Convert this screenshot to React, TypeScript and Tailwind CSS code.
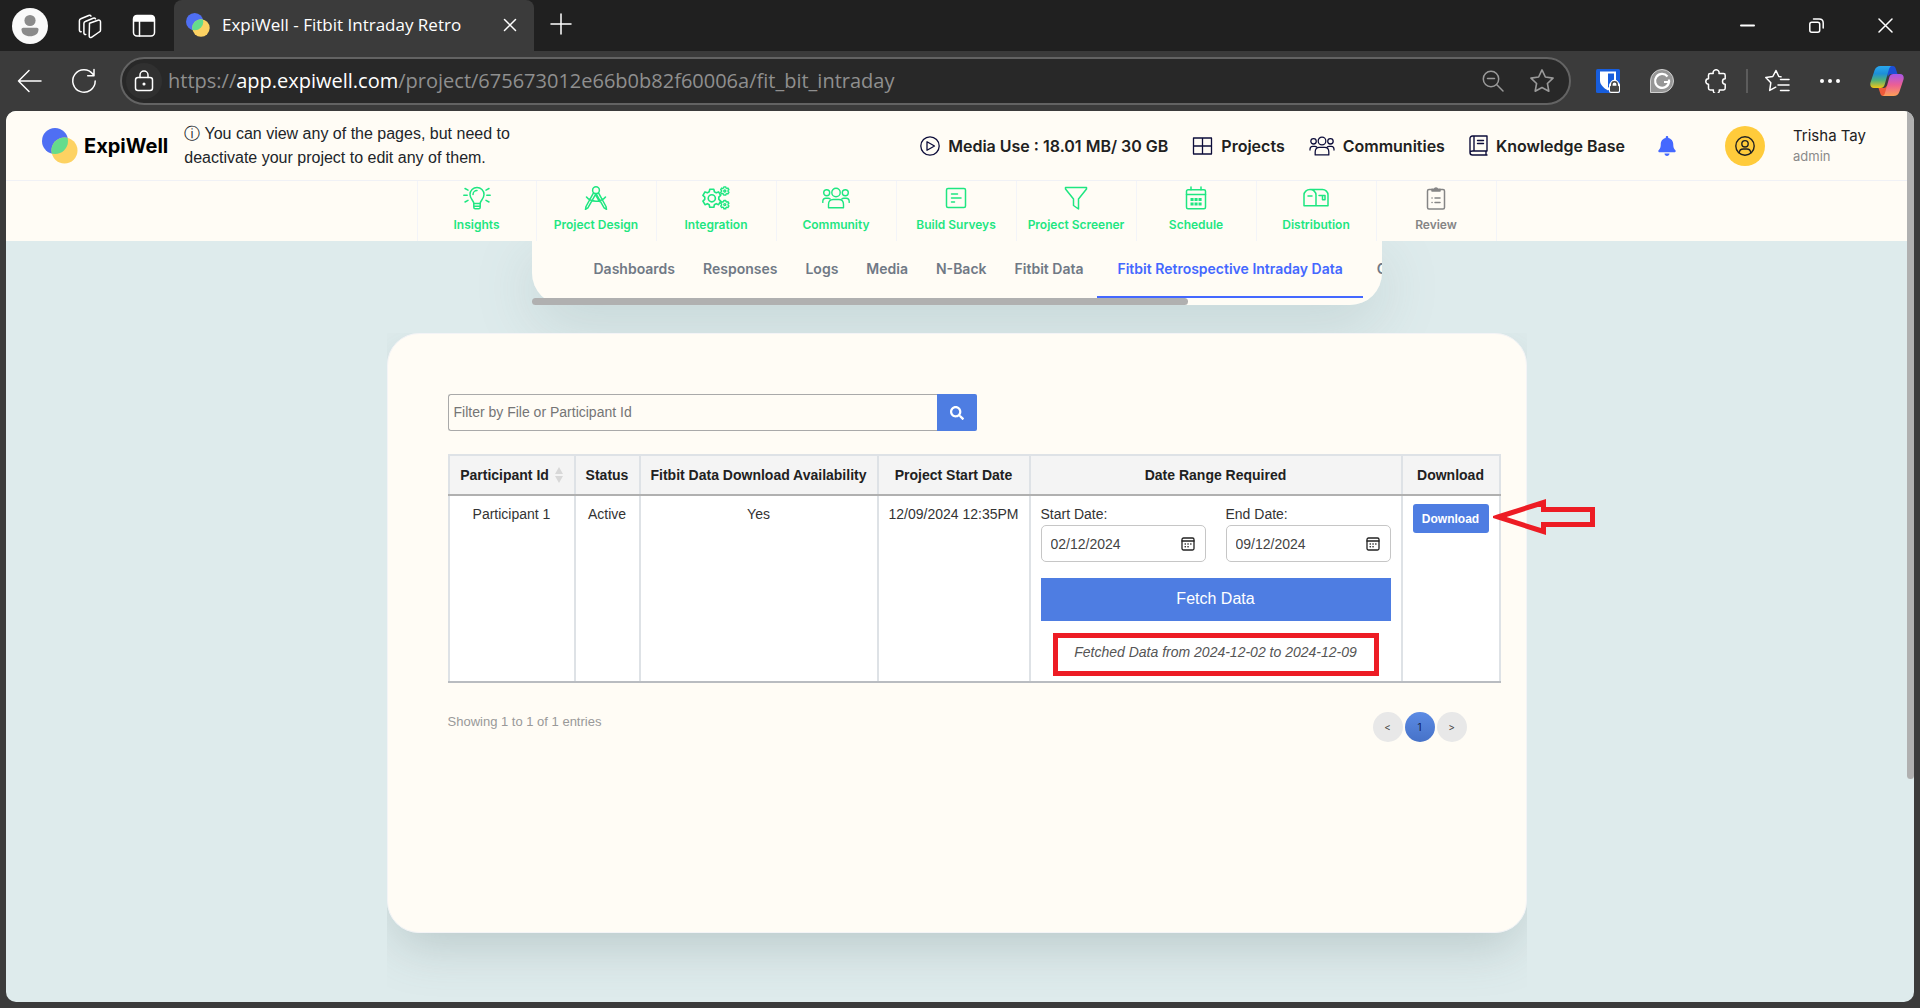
import { useState, type ReactNode } from "react";
import { FaBell, FaSearch } from "react-icons/fa";
import { clsx } from "clsx";

type IconProps = { className?: string; box?: string; width?: number; children: ReactNode };

function Icon({ className, box = "0 0 24 24", width = 1.5, children }: IconProps) {
  return (
    <svg className={clsx("shrink-0", className)} viewBox={box} fill="none" stroke="currentColor" strokeWidth={width} strokeLinecap="round" strokeLinejoin="round" aria-hidden="true">
      {children}
    </svg>
  );
}

function LogoMark({ className }: { className?: string }) {
  return (
    <svg className={clsx("shrink-0", className)} viewBox="0 0 36 36" aria-hidden="true">
      <defs>
        <clipPath id="logo-blue">
          <circle cx="13" cy="13" r="13" />
        </clipPath>
      </defs>
      <circle cx="13" cy="13" r="13" fill="#4f6ff3" />
      <circle cx="22.5" cy="22.5" r="13" fill="#fdd262" />
      <circle cx="22.5" cy="22.5" r="13" fill="#65dc8c" clipPath="url(#logo-blue)" />
    </svg>
  );
}

function PeopleIcon({ className }: { className?: string }) {
  return (
    <Icon className={className} box="0 0 28 22" width={1.4}>
      <circle cx="14" cy="5.5" r="4.2" />
      <circle cx="4.7" cy="5.8" r="3" />
      <circle cx="23.3" cy="5.8" r="3" />
      <path d="M6.5 20.8v-3.3c0-3.2 1.8-5 4.6-5h5.8c2.8 0 4.6 1.8 4.6 5v3.3z" />
      <path d="M.8 15.4v-.8c0-2 1.2-3.3 3-3.3h2.4c.8 0 1.5.3 2 .8M27.2 15.4v-.8c0-2-1.2-3.3-3-3.3h-2.4c-.8 0-1.5.3-2 .8" />
    </Icon>
  );
}

function TitleBar() {
  return (
    <div className="flex h-[51px] items-center bg-[#202020] text-white">
      <button aria-label="Profile" className="ml-3">
        <svg className="size-9" viewBox="0 0 36 36">
          <circle cx="18" cy="18" r="18" fill="#fafafa" />
          <circle cx="18" cy="12.5" r="5.6" fill="#8b8b8b" />
          <path d="M9.5 21.5c0-1 .8-1.7 1.7-1.7h13.6c1 0 1.7.8 1.7 1.7 0 4.5-3.8 6.8-8.5 6.8s-8.5-2.300-8.500-6.800z" fill="#8b8b8b" />
        </svg>
      </button>
      <button aria-label="Workspaces" className="ml-7">
        <Icon className="size-7" box="0 0 28 28">
          <path d="M13.500 11.300l8.500-3.100c1.300-.5 2.500.3 2.500 1.600v8.400c0 .8-.5 1.500-1.300 1.800l-7.700 5.300c-1.200.6-2.300 0-2.300-1.300z" />
          <path d="M9.800 22.500c-1.100.2-1.900-.5-1.900-1.600v-9.400c0-.9.500-1.700 1.400-2l7.900-3.300c1-.4 1.900-.1 2.300.6" />
          <path d="M5.200 19.800c-1.100.1-1.800-.6-1.800-1.700V8.800c0-.9.500-1.700 1.400-2l7.900-3.300c1-.4 1.900-.1 2.300.6" />
        </Icon>
      </button>
      <button aria-label="Tab actions" className="ml-[26px]">
        <Icon className="size-7" box="0 0 28 28">
          <rect x="3.500" y="3.500" width="21" height="20.500" rx="3.500" />
          <path d="M4 9V6.500C4 5 5 4 6.500 4h15C23 4 24 5 24 6.500V9z" fill="currentColor" />
          <path d="M9.500 9.500V24" />
        </Icon>
      </button>
      <div className="ml-4 flex h-full w-[360px] items-center rounded-t-lg bg-[#3b3b3b] px-3 pb-0.5">
        <LogoMark className="size-6" />
        <span className="ml-3 flex-1 truncate font-['Open_Sans',sans-serif] text-[17px]">ExpiWell - Fitbit Intraday Retro</span>
        <button aria-label="Close tab" className="p-1">
          <Icon className="size-4" box="0 0 16 16"><path d="M2.500 2.500l11 11M13.500 2.500l-11 11" /></Icon>
        </button>
      </div>
      <button aria-label="New tab" className="ml-4 pb-1">
        <Icon className="size-[22px]" box="0 0 22 22"><path d="M11 1v20M1 11h20" /></Icon>
      </button>
      <div className="ml-auto flex items-center gap-[54px] pr-[27px]">
        <button aria-label="Minimize">
          <Icon className="size-[15px]" box="0 0 15 15" width={2}><path d="M1 7.500h13" /></Icon>
        </button>
        <button aria-label="Restore">
          <Icon className="size-[15px]" box="0 0 15 15">
            <rect x=".8" y="4.300" width="9.900" height="9.900" rx="2" />
            <path d="M4.500 1h5.700c2.300 0 4 1.700 4 4v5" />
          </Icon>
        </button>
        <button aria-label="Close window">
          <Icon className="size-[15px]" box="0 0 15 15"><path d="M1 1l13 13M14 1L1 14" /></Icon>
        </button>
      </div>
    </div>
  );
}

function AddressBar() {
  return (
    <div className="flex h-15 items-center text-white">
      <button aria-label="Back" className="ml-4">
        <Icon className="size-7" box="0 0 28 28"><path d="M25 14H2.500M13 3.500L2.500 14 13 24.500" /></Icon>
      </button>
      <button aria-label="Refresh" className="mr-[22px] ml-[26px]">
        <Icon className="size-7" box="0 0 28 28"><path d="M25.200 14A11.200 11.200 0 1 1 23 7.300M24 2.500v6.300h-6.300" /></Icon>
      </button>
      <div className="flex h-12 min-w-0 flex-1 items-center rounded-full border-2 border-[#636363] bg-[#282828] px-1">
        <button aria-label="Site information" className="flex size-9 shrink-0 items-center justify-center rounded-full bg-[#303030]">
          <Icon className="size-6">
            <rect x="3.500" y="8.500" width="17" height="13" rx="2.500" />
            <path d="M8 8.500V6a4 4 0 0 1 8 0v2.500" />
            <circle cx="12" cy="15" r=".8" fill="currentColor" />
          </Icon>
        </button>
        <p className="ml-1.5 flex-1 truncate font-['Open_Sans',sans-serif] text-[20px] text-[#8f8f8f]">
          https://<span className="text-white">app.expiwell.com</span>/project/675673012e66b0b82f60006a/fit_bit_intraday
        </p>
        <button aria-label="Zoom" className="text-[#9a9a9a]">
          <Icon className="size-6"><circle cx="10" cy="10" r="7.700" /><path d="M15.800 15.800L22 22M6.500 9.500h7" /></Icon>
        </button>
        <button aria-label="Add to favorites" className="mr-2.5 ml-6 text-[#9a9a9a]">
          <Icon className="size-[26px]"><path d="M12 1.800l3.100 6.500 7.100 1-5.200 5 1.300 7.100-6.300-3.400-6.300 3.400L7 14.300l-5.200-5 7.100-1z" /></Icon>
        </button>
      </div>
      <button aria-label="Bitwarden" className="ml-[25px]">
        <svg className="size-6" viewBox="0 0 24 24">
          <rect width="24" height="24" rx="1.500" fill="#175ddc" />
          <path d="M4 2.500h16v9c0 4.500-4 7.800-8 10-4-2.200-8-5.500-8-10z" fill="#fff" />
          <path d="M12 4.500h6v7c0 3-3 5.500-6 7.300z" fill="#175ddc" />
          <rect x="13" y="14" width="11" height="10" rx="2" fill="#fff" />
          <path d="M15.800 17v-1.500a2.700 2.700 0 0 1 5.400 0V17" fill="none" stroke="#fff" strokeWidth="4" />
          <path d="M15.800 17v-1.500a2.700 2.700 0 0 1 5.400 0V17" fill="none" stroke="#444" strokeWidth="1.500" />
          <rect x="14" y="16.800" width="9" height="6" rx="1" fill="#444" />
        </svg>
      </button>
      <button aria-label="Grammarly" className="ml-[30px]">
        <svg className="size-6" viewBox="0 0 24 24">
          <path d="M.5 23.500V12A11.500 11.500 0 1 1 12 23.500z" fill="#969696" stroke="#d0d0d0" />
          <path d="M17.500 7.500a7 7 0 1 0 1.500 5.500h-5M19 13v-2.500" fill="none" stroke="#fff" strokeWidth="2.200" />
        </svg>
      </button>
      <button aria-label="Extensions" className="ml-[30px]">
        <Icon className="size-6">
          <path d="M9.200 4.500a3 3 0 1 1 5.800 0h4.500c1 0 1.700.7 1.700 1.700v3.600a2.700 2.700 0 1 0 0 5.400v4.100c0 1-.7 1.700-1.700 1.700h-4.300a3 3 0 1 1-5.800 0H6.200c-1 0-1.700-.7-1.700-1.700v-4.100a2.700 2.700 0 1 1 0-5.400V6.200c0-1 .7-1.700 1.700-1.700z" />
        </Icon>
      </button>
      <div className="ml-[18px] h-6 w-0.5 bg-[#5c5c5c]" />
      <button aria-label="Favorites" className="ml-4">
        <Icon className="size-[26px]" box="0 0 26 26">
          <path d="M17 8.800l-2.200-.3L12 2.500 8.800 8.500l-7 1.100 5 5.200-1.100 7.600 6-3.200M16.500 11.500H25M14 17h11M16.500 22.500H25" />
        </Icon>
      </button>
      <button aria-label="Settings and more" className="ml-[30px]">
        <svg className="h-6 w-5" viewBox="0 0 20 24" fill="currentColor"><circle cx="2" cy="12" r="2" /><circle cx="10" cy="12" r="2" /><circle cx="18" cy="12" r="2" /></svg>
      </button>
      <button aria-label="Copilot" className="mr-4 ml-[30px]">
        <svg className="size-[34px]" viewBox="0 0 34 34">
          <defs>
            <linearGradient id="cop-a" x1="0" y1="0" x2="0" y2="1"><stop offset="0" stopColor="#2aa8ef" /><stop offset=".35" stopColor="#1d8fd8" /><stop offset=".65" stopColor="#4fb07a" /><stop offset="1" stopColor="#f3c614" /></linearGradient>
            <linearGradient id="cop-b" x1="0" y1="0" x2="0" y2="1"><stop offset="0" stopColor="#a656e8" /><stop offset=".5" stopColor="#ec5f94" /><stop offset="1" stopColor="#fda057" /></linearGradient>
          </defs>
          <path d="M16 2h7c1.500 0 2.300 1 2.700 2.500L27.500 10h-6c-2 0-3 1-3.600 3z" fill="#1c4fd6" />
          <path d="M18 32h-5c-1.500 0-2.300-1-2.700-2.500L8.500 24h5c2 0 3-1 3.600-3z" fill="#ee5a3a" />
          <path d="M10.500 2h11c-1.500.5-2.200 2-2.700 3.800l-4 14.500C14.200 22.700 13 24 10.500 24H4C1 24-.3 21.500.5 18.500L4.500 6.500C5.500 3.500 7.500 2 10.500 2z" fill="url(#cop-a)" />
          <path d="M23.500 32h-11c1.500-.5 2.200-2 2.700-3.800l4-14.500c.6-2.400 1.800-3.700 4.300-3.700H30c3 0 4.300 2.500 3.500 5.500l-4 12c-1 3-3 4.500-6 4.500z" fill="url(#cop-b)" />
        </svg>
      </button>
    </div>
  );
}

const navLinks = [
  {
    label: "Media Use : 18.01 MB/ 30 GB",
    icon: (
      <Icon className="size-5" box="0 0 20 20" width={1.3}>
        <circle cx="10" cy="10" r="9.200" />
        <path d="M7 5.700v8.600l7.500-4.300z" />
      </Icon>
    ),
  },
  {
    label: "Projects",
    icon: <Icon className="h-[18px] w-[21px]" box="0 0 21 18" width={1.3}><path d="M1.500 1h18v16h-18zM10.500 1v16M1.500 9h18" /></Icon>,
  },
  { label: "Communities", icon: <PeopleIcon className="h-5 w-[26px]" /> },
  {
    label: "Knowledge Base",
    icon: (
      <Icon className="h-[21px] w-[19px]" box="0 0 19 21" width={1.4}>
        <path d="M18 16V1H3.500C2 1 1 2 1 3.500v14C1 19 2 20 3.500 20H18M18 16H3.500C2 16 1 16.800 1 18M5 1v15M8.500 5.500h6M8.500 8.500h6M17 16v4" />
      </Icon>
    ),
  },
];

function Header() {
  return (
    <header className="flex h-[70px] items-center border-b border-[#f0f1f5] pr-[41px] pl-9">
      <a href="#home" className="flex items-center gap-1.5 font-[Inter,sans-serif] text-[20px] font-bold text-black">
        <LogoMark className="size-9" />
        ExpiWell
      </a>
      <p className="ml-4 w-[350px] font-['Liberation_Sans',sans-serif] text-[16px] leading-6 text-[#212529]">ⓘ You can view any of the pages, but need to deactivate your project to edit any of them.</p>
      <nav className="ml-auto flex items-center gap-6 font-[Inter,sans-serif] text-[16px] font-semibold whitespace-nowrap text-[#212121]">
        {navLinks.map((link) => (
          <a key={link.label} href="#" className="flex items-center gap-2">
            <span className="text-[#0d0d3a]">{link.icon}</span>
            {link.label}
          </a>
        ))}
      </nav>
      <button aria-label="Notifications" className="ml-8 text-[#4468ff]">
        <FaBell className="size-5" />
      </button>
      <div className="ml-12 flex size-10 shrink-0 items-center justify-center rounded-full bg-[#ffcb3b] text-[#212121]">
        <Icon className="size-5" box="0 0 20 20" width={1.4}>
          <circle cx="10" cy="10" r="9.200" />
          <circle cx="10" cy="7.800" r="3.200" />
          <path d="M4.200 16.800c.3-2.500 2-3.800 4-3.800h3.600c2 0 3.700 1.300 4 3.800" />
        </Icon>
      </div>
      <div className="ml-7 font-[Inter,sans-serif] whitespace-nowrap">
        <div className="text-[15px] leading-5 text-[#212121]">Trisha Tay</div>
        <div className="text-[13px] leading-5 text-[#8a8a8a]">admin</div>
      </div>
    </header>
  );
}

const gearTeeth = "M8.100 2.500h3.800l.5 2.300 1.700 1 2.200-.9 1.900 3.300-1.700 1.600v2l1.700 1.600-1.900 3.300-2.200-.9-1.700 1-.5 2.300H8.100l-.5-2.300-1.700-1-2.200.9-1.900-3.300 1.700-1.600v-2L1.800 8.200l1.900-3.300 2.200.9 1.700-1z";

const steps = [
  {
    label: "Insights",
    icon: (
      <Icon className="h-6 w-7" box="0 0 28 24" width={1.5}>
        <path d="M10.800 17.500c0-3-3.800-4.500-3.800-9a7 7 0 0 1 14 0c0 4.500-3.800 6-3.800 9zM10.800 17.500v3.700c0 .9.600 1.500 1.400 1.500h3.600c.8 0 1.400-.6 1.400-1.500v-3.700M10.800 20.200h6.400M10 8.500a4 4 0 0 1 4-4" />
        <path d="M.8 9.300h3.400M23.800 9.300h3.400M2 2.500l3 1.700M26 2.500l-3 1.700M2 16l3-1.700M26 16l-3-1.700" />
      </Icon>
    ),
  },
  {
    label: "Project Design",
    icon: (
      <Icon className="size-6" width={1.5}>
        <circle cx="12" cy="4.200" r="3.400" />
        <path d="M9.500 6.800L2 20.500l-.5 2.800 2.400-1.500L12 7.600l8.100 14.200 2.400 1.500-.5-2.800-7.500-13.700M2.500 11c4.500 5.500 14.500 5.500 19 0M12 9.500l3.500 6" />
      </Icon>
    ),
  },
  {
    label: "Integration",
    icon: (
      <Icon className="h-6 w-7" box="0 0 28 24" width={1.5}>
        <g transform="translate(-1 .6) scale(1.080)">
          <path d={gearTeeth} />
          <circle cx="10" cy="10.800" r="3.300" />
        </g>
        <g transform="translate(17.800 -.4) scale(.5)" strokeWidth="2.800">
          <path d={gearTeeth} />
          <circle cx="10" cy="10.800" r="2" />
        </g>
        <g transform="translate(17.800 13.200) scale(.5)" strokeWidth="2.800">
          <path d={gearTeeth} />
          <circle cx="10" cy="10.800" r="2" />
        </g>
      </Icon>
    ),
  },
  { label: "Community", icon: <PeopleIcon className="h-6 w-7" /> },
  {
    label: "Build Surveys",
    icon: <Icon className="size-6"><rect x="2.500" y="2.500" width="19" height="19" rx="1.500" /><path d="M7.500 8h6M7.500 12h9.500M7.500 16h3" /></Icon>,
  },
  { label: "Project Screener", icon: <Icon className="size-6"><path d="M1.500 1.500h21v1.500L14.500 13v10L9.500 19.500V13L1.500 3z" /></Icon> },
  {
    label: "Schedule",
    icon: (
      <Icon className="size-6">
        <rect x="2.500" y="3.800" width="19" height="19" rx="1.500" />
        <path d="M2.500 8.500h19M7 1v2.800M17 1v2.800" />
        <path d="M8 13.500h.1M12 13.500h.1M16 13.500h.1M8 18h.1M12 18h.1M16 18h.1" strokeWidth="3" strokeLinecap="square" />
      </Icon>
    ),
  },
  {
    label: "Distribution",
    icon: (
      <Icon className="h-6 w-[26px]" box="0 0 26 24">
        <path d="M7 3.500h12.500c3 0 5.500 2.500 5.500 5.500v10.800H1V9c0-3 2.700-5.500 6-5.500s6 2.500 6 5.500v10.800M5 10h4M16 9.500h6v4.300h-2.500V9.500" />
      </Icon>
    ),
  },
  {
    label: "Review",
    icon: (
      <Icon className="size-6">
        <path d="M8 3.500H5c-.8 0-1.500.7-1.500 1.500v16.500c0 .8.700 1.500 1.500 1.500h14c.8 0 1.500-.7 1.500-1.500V5c0-.8-.7-1.500-1.500-1.500h-3" />
        <path d="M8 5V3.200h2.300a1.800 1.800 0 0 1 3.400 0H16V5z" fill="currentColor" />
        <path d="M11 12h5M11 16.500h5M8 12h.1M8 16.500h.1" />
      </Icon>
    ),
  },
];

function Steps() {
  return (
    <nav className="flex justify-center font-[Inter,sans-serif] text-[12px] font-semibold">
      {steps.map((step, i) => (
        <a key={step.label} href="#" className={clsx("flex h-[60px] w-[120px] flex-col items-center border-r border-[#f3f4f8] pt-[5px]", i === 0 && "border-l", i === steps.length - 1 ? "text-[#858585]" : "text-[#1ee681]")}>
          {step.icon}
          <span className="mt-[5px] leading-5">{step.label}</span>
        </a>
      ))}
    </nav>
  );
}

const tabs = ["Dashboards", "Responses", "Logs", "Media", "N-Back", "Fitbit Data", "Fitbit Retrospective Intraday Data", "C"];

function SubTabs() {
  const [active, setActive] = useState("Fitbit Retrospective Intraday Data");
  return (
    <div className="w-full overflow-hidden rounded-b-[32px] bg-[#fffcf5]">
      <div className="flex h-[57px] pl-12 font-[Inter,sans-serif] text-[14px] font-semibold whitespace-nowrap">
        {tabs.map((tab) => (
          <button key={tab} onClick={() => setActive(tab)} className={clsx("border-b-2", tab === active ? "border-[#4468ff] px-5 text-[#4468ff]" : "border-transparent px-3.5 text-[#707985]")}>
            {tab}
          </button>
        ))}
      </div>
      <div className="h-[7px]" />
    </div>
  );
}

function DateField({ id, label, value }: { id: string; label: string; value: string }) {
  return (
    <div className="flex-1">
      <label htmlFor={id} className="block leading-[21px]">{label}</label>
      <div className="flex h-[37px] items-center rounded-[5px] border border-[#c6c6c6] bg-white pr-2.5 pl-[9px] text-[#444]">
        <input id={id} type="text" defaultValue={value} className="w-full min-w-0 flex-1 outline-none" />
        <Icon className="size-3.5 text-[#222]" box="0 0 14 14" width={1.3}>
          <rect x="1" y="1" width="12" height="12" rx="1.500" />
          <path d="M1 4h12" />
          <path d="M4.200 7h.1M7 7h.1M9.800 7h.1M4.200 9.800h.1M7 9.800h.1" strokeWidth="1.600" />
        </Icon>
      </div>
    </div>
  );
}

const th = "h-10 border-2 border-[#dee2e6] border-b-[#b0b0b0] text-center font-bold";
const td = "border-x-2 border-b-2 border-[#dee2e6] border-b-[#b9bcc0] pt-2 text-center align-top";

function DataTable() {
  return (
    <table className="mt-[23px] w-full table-fixed border-collapse text-[14px] leading-5">
      <colgroup>
        <col className="w-[126px]" />
        <col className="w-[65px]" />
        <col className="w-[238px]" />
        <col className="w-[152px]" />
        <col />
        <col className="w-[98px]" />
      </colgroup>
      <thead className="bg-[#f4f4f4] text-[#212121]">
        <tr>
          <th className={th}>
            <span className="inline-flex items-center gap-1.5">
              Participant Id
              <svg className="h-4 w-2" viewBox="0 0 8 16" fill="#d8d8d8" aria-hidden="true"><path d="M4 0l4 7H0zM4 16l4-7H0z" /></svg>
            </span>
          </th>
          <th className={th}>Status</th>
          <th className={th}>Fitbit Data Download Availability</th>
          <th className={th}>Project Start Date</th>
          <th className={th}>Date Range Required</th>
          <th className={th}>Download</th>
        </tr>
      </thead>
      <tbody className="bg-white text-[#333]">
        <tr>
          <td className={td}>Participant 1</td>
          <td className={td}>Active</td>
          <td className={td}>Yes</td>
          <td className={td}>12/09/2024 12:35PM</td>
          <td className={clsx(td, "px-2.5 text-left")}>
            <div className="flex gap-5">
              <DateField id="start-date" label="Start Date:" value="02/12/2024" />
              <DateField id="end-date" label="End Date:" value="09/12/2024" />
            </div>
            <button className="mt-4 h-[43px] w-full bg-[#4e7de2] pb-0.5 text-[16px] text-white">Fetch Data</button>
            <div className="mx-3 mt-3 mb-[5px] flex h-[43px] items-center justify-center border-5 border-[#ed1c24] pb-1.5 text-[#555] italic">
              Fetched Data from 2024-12-02 to 2024-12-09
            </div>
          </td>
          <td className={td}>
            <div className="relative inline-block">
              <button className="h-[29px] w-[76px] rounded-[3px] bg-[#4e7de2] text-[12px] font-bold text-white">Download</button>
              <svg className="absolute top-[-5px] left-[80px] h-9 w-[102px]" viewBox="0 0 102 36" fill="none" stroke="#ed1c24" strokeWidth="5" aria-hidden="true">
                <path d="M5 18L50.500 3.500V10.500H99.500V25.500H50.500V32.500z" />
              </svg>
            </div>
          </td>
        </tr>
      </tbody>
    </table>
  );
}

function Pagination() {
  return (
    <div className="mt-[29px] flex items-start justify-between pr-[34px]">
      <p className="text-[13px] leading-5 text-[#999]">Showing 1 to 1 of 1 entries</p>
      <div className="flex gap-0.5 font-[Inter,sans-serif] text-[10px] text-[#444]">
        <button aria-label="Previous page" className="size-[30px] rounded-full bg-[#e8e8e8]">&lt;</button>
        <button className="size-[30px] rounded-full bg-linear-to-b from-[#5c8be4] to-[#4672c8] text-[#10204a]">1</button>
        <button aria-label="Next page" className="size-[30px] rounded-full bg-[#e8e8e8]">&gt;</button>
      </div>
    </div>
  );
}

function ParticipantsCard() {
  return (
    <section className="relative min-h-[600px] rounded-[32px] border border-[#f4f4f6] bg-[#fffcf5] pt-15 pr-[25px] pl-15 font-['Liberation_Sans',sans-serif]">
      <form className="flex h-[37px] w-[529px]" onSubmit={(e) => e.preventDefault()}>
        <input aria-label="Filter by File or Participant Id" placeholder="Filter by File or Participant Id" className="min-w-0 flex-1 rounded-l-[3px] border border-r-0 border-[#a9a9a9] px-[5px] text-[14px] outline-none placeholder:text-[#757575]" />
        <button aria-label="Search" className="flex w-10 items-center justify-center rounded-r-[2px] bg-[#4e7de2] text-white">
          <FaSearch className="size-3.5" />
        </button>
      </form>
      <DataTable />
      <Pagination />
    </section>
  );
}

export default function App() {
  return (
    <div className="flex min-h-screen flex-col bg-[#3b3b3b]">
      <TitleBar />
      <AddressBar />
      <div className="relative mx-1.5 mb-1.5 flex-1 overflow-hidden rounded-[10px] bg-[#deebec]">
        <div className="pr-[7px]">
          <div className="relative z-10 bg-[#fffcf5]">
            <Header />
            <Steps />
          </div>
          <div className="relative mx-auto w-full max-w-[850px] rounded-b-[32px] shadow-[0_20px_60px_rgba(90,120,120,0.18)]">
            <SubTabs />
            <div className="absolute bottom-0 left-0 h-[7px] w-[656px] rounded-full bg-[#b0b0b0]" />
          </div>
          <main className="relative mx-auto mt-7 w-full max-w-[1140px] pb-[69px]">
            {/* the shadow is cut off at the container's sides, the card is not */}
            <div className="absolute inset-0 overflow-hidden pb-[69px]">
              <div className="h-full rounded-[32px] shadow-[0_20px_50px_-8px_rgba(90,110,110,0.28)]" />
            </div>
            <ParticipantsCard />
          </main>
        </div>
        <div className="absolute top-0 right-0 z-10 h-3/4 w-[7px] rounded-b-full bg-[#b0b0b0]" />
      </div>
    </div>
  );
}
